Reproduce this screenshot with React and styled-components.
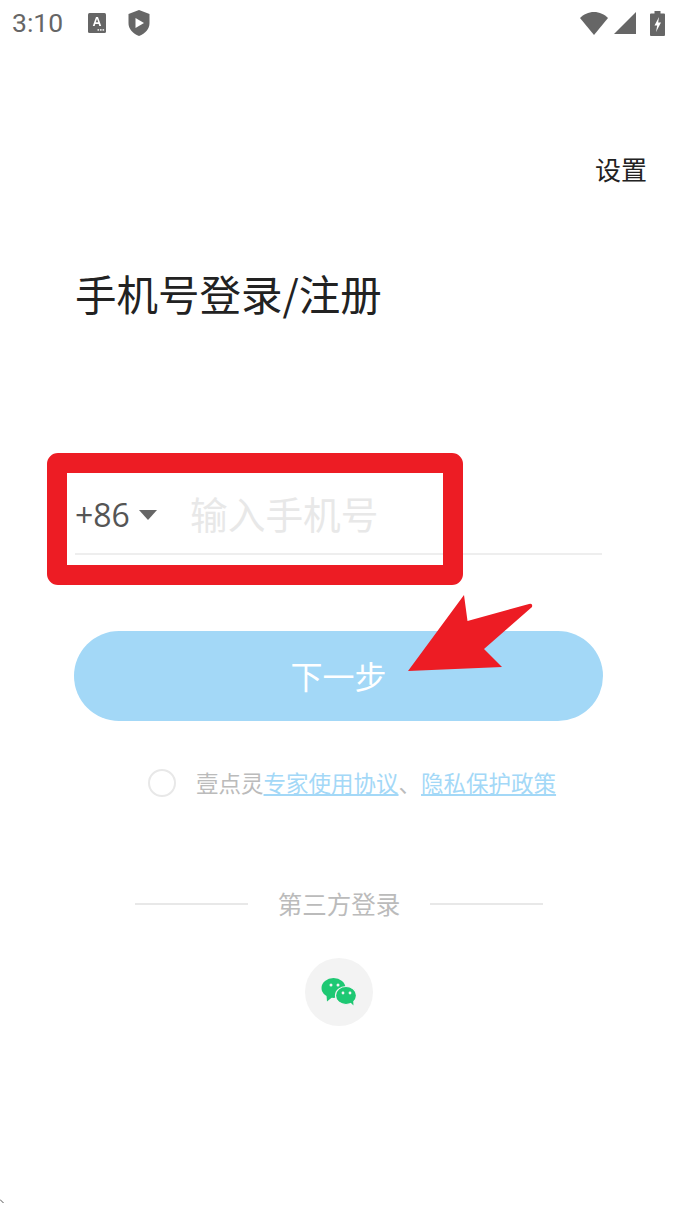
import React from "react";
import styled, { createGlobalStyle } from "styled-components";

const Global = createGlobalStyle`
  html, body { margin: 0; padding: 0; background: #fff; }
  * { box-sizing: border-box; }
`;
const CJK = `"Noto Sans CJK SC", "Noto Sans", sans-serif`;

const Page = styled.div`
  position: relative;
  width: 677px;
  height: 1205px;
  overflow: hidden;
  background: #fff;
  font-family: ${CJK};
  display: flex;
  flex-direction: column;
`;
const StatusBar = styled.div`
  height: 48px;
  padding: 0 12px 2px 12px;
  display: flex;
  align-items: center;
  color: #666;
`;
const Time = styled.span`
  font-family: Roboto, sans-serif;
  font-size: 26.5px;
  line-height: 46px;
  width: 76px;
`;
const StatusLeft = styled.div`
  display: flex;
  align-items: center;
  gap: 22px;
  flex: 1;
`;
const StatusRight = styled.div`
  display: flex;
  align-items: center;
  gap: 6px;
`;
const TopBar = styled.div`
  display: flex;
  justify-content: flex-end;
  padding: 103px 30px 0 0;
`;
const SettingsLink = styled.span`
  font-size: 26px;
  line-height: 36px;
  color: #222;
`;
const Title = styled.h1`
  margin: 76px 0 0 75px;
  font-size: 41.5px;
  font-weight: 400;
  line-height: 60px;
  color: #222;
`;
const PhoneRow = styled.div`
  margin: 154px 75px 0;
  height: 78px;
  border-bottom: 2px solid #eeeeee;
  display: flex;
  align-items: flex-start;
  padding-top: 13px;
`;
const Code = styled.span`
  font-family: "Open Sans", sans-serif;
  font-size: 32px;
  line-height: 50px;
  color: #555;
  width: 64px;
`;
const Caret = styled.span`
  width: 0;
  height: 0;
  margin-top: 20px;
  border-left: 9px solid transparent;
  border-right: 9px solid transparent;
  border-top: 10px solid #666;
`;
const Placeholder = styled.span`
  margin: -2px 0 0 33px;
  font-size: 37.7px;
  line-height: 50px;
  color: #e8e8e8;
`;
const NextButton = styled.button`
  margin: 76px 0 0 74px;
  width: 529px;
  height: 90px;
  border: 0;
  border-radius: 45px;
  background: #a3d8f7;
  color: #fff;
  font-family: ${CJK};
  font-size: 32px;
  padding: 0 0 2px;
`;
const Agreement = styled.div`
  margin: 47px 0 0 148px;
  height: 30px;
  display: flex;
  align-items: center;
`;
const Radio = styled.span`
  width: 28px;
  height: 28px;
  border: 2px solid #e8e8e8;
  border-radius: 50%;
  margin-right: 20px;
`;
const AgreeText = styled.span`
  margin-top: -2px;
  font-size: 22.5px;
  line-height: 30px;
  color: #bbb;
  white-space: nowrap;
`;
const AgreeLink = styled.span`
  color: #a3d8f7;
  text-decoration: underline;
  text-underline-offset: 2px;
`;
const Divider = styled.div`
  margin: 88px 0 0 135px;
  width: 408px;
  display: flex;
  align-items: center;
  justify-content: space-between;
  height: 36px;
`;
const Rule = styled.span`
  width: 113px;
  height: 2px;
  background: #e8e8e8;
`;
const DividerText = styled.span`
  font-size: 24.5px;
  line-height: 36px;
  color: #bbb;
`;
const WeChatButton = styled.div`
  margin: 36px 0 0 305px;
  width: 68px;
  height: 68px;
  border-radius: 50%;
  background: #f3f3f3;
  display: flex;
  align-items: center;
  justify-content: center;
`;
const RedBox = styled.div`
  position: absolute;
  left: 47px;
  top: 453px;
  width: 416px;
  height: 132px;
  border: 20px solid #ed1c24;
  border-radius: 11px;
`;
const Arrow = styled.svg`
  position: absolute;
  left: 400px;
  top: 590px;
`;
const CornerMark = styled.svg`
  position: absolute;
  left: 0;
  bottom: 0;
`;

export default function App() {
  return (
    <Page>
      <Global />
      <StatusBar>
        <Time>3:10</Time>
        <StatusLeft>
          <svg width="18" height="20" viewBox="0 0 18 20">
            <rect width="18" height="20" rx="1.5" fill="#666" />
            <path d="M4.800 13 8 4h2l3.200 9h-1.900l-.6-2H7.300l-.6 2zM7.800 9.300h2.400L9 5.800z" fill="#fff" />
            <rect x="9.500" y="16" width="1.600" height="1.800" fill="#e0e0e0" />
            <rect x="12" y="16" width="1.600" height="1.800" fill="#e0e0e0" />
            <rect x="14.500" y="16" width="1.600" height="1.800" fill="#e0e0e0" />
          </svg>
          <svg width="22" height="26" viewBox="0 0 22 26">
            <path d="M11 0 21.500 4V13C21.500 19 17.500 23.500 11 26 4.500 23.500.5 19 .5 13V4z" fill="#666" />
            <path d="M7.500 8 16 13 7.500 18z" fill="#fff" />
          </svg>
        </StatusLeft>
        <StatusRight>
          <svg width="28" height="23" viewBox="0 0 28 23">
            <path d="M0 6C3.500 2.500 8.500 0 14 0s10.500 2.500 14 6L14 23z" fill="#666" />
          </svg>
          <svg width="22" height="22" viewBox="0 0 22 22">
            <path d="M22 0V22H0z" fill="#666" />
          </svg>
          <svg width="15" height="25" viewBox="0 0 15 25" style={{ marginLeft: 8 }}>
            <path d="M4.500 0h6v2.500H14a1 1 0 0 1 1 1V24a1 1 0 0 1-1 1H1a1 1 0 0 1-1-1V3.500a1 1 0 0 1 1-1h3.500z" fill="#666" />
            <path d="M9 6 4.500 14.500H7.200L6 21 11 11.500H8.200z" fill="#fff" />
          </svg>
        </StatusRight>
      </StatusBar>
      <TopBar>
        <SettingsLink>设置</SettingsLink>
      </TopBar>
      <Title>手机号登录/注册</Title>
      <PhoneRow>
        <Code>+86</Code>
        <Caret />
        <Placeholder>输入手机号</Placeholder>
      </PhoneRow>
      <NextButton>下一步</NextButton>
      <Agreement>
        <Radio />
        <AgreeText>
          壹点灵<AgreeLink>专家使用协议</AgreeLink>、<AgreeLink>隐私保护政策</AgreeLink>
        </AgreeText>
      </Agreement>
      <Divider>
        <Rule />
        <DividerText>第三方登录</DividerText>
        <Rule />
      </Divider>
      <WeChatButton>
        <svg width="36" height="28" viewBox="0 0 36 28">
          <ellipse cx="12.500" cy="10" rx="12" ry="10" fill="#1ec873" />
          <path d="M5.500 17 6 23.500 11.500 19z" fill="#1ec873" />
          <ellipse cx="25" cy="17.500" rx="10.500" ry="9" fill="#1ec873" stroke="#f3f3f3" strokeWidth="1.2" />
          <path d="M29 24 32.500 27.500 32 21z" fill="#1ec873" />
          <circle cx="10" cy="7" r="1.500" fill="#f3f3f3" />
          <circle cx="17" cy="7" r="1.500" fill="#f3f3f3" />
          <circle cx="22" cy="15" r="1.400" fill="#f3f3f3" />
          <circle cx="29" cy="15" r="1.400" fill="#f3f3f3" />
        </svg>
      </WeChatButton>

      <RedBox />
      <Arrow width="140" height="90" viewBox="400 590 140 90">
        <path d="M408 671 464 595 467.500 621 529 604Q533 603 532 607L484 649 502 667z" fill="#ed1c24" />
      </Arrow>
      <CornerMark width="6" height="6" viewBox="0 0 6 6">
        <path d="M0 0.500 3.500 4" stroke="#555" strokeWidth="1" fill="none" />
      </CornerMark>
    </Page>
  );
}
